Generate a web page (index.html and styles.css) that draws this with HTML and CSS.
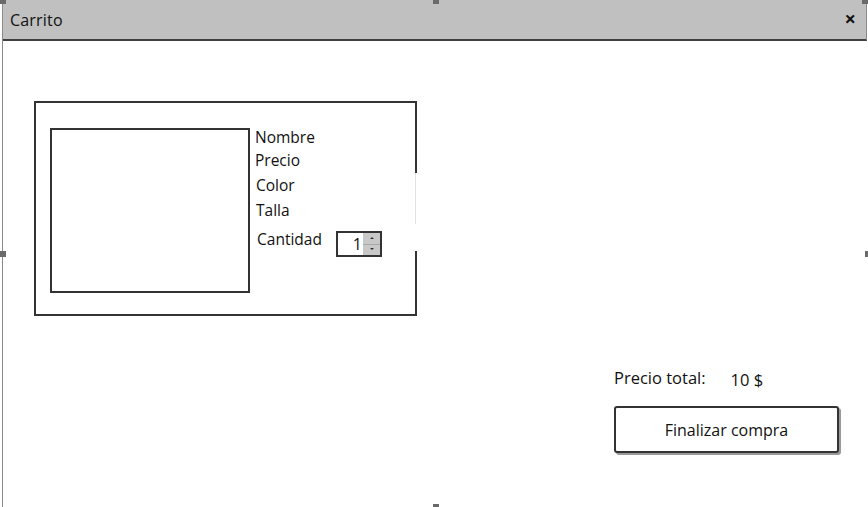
FILE: index.html
```html
<!DOCTYPE html>
<html lang="es">
<head>
<meta charset="utf-8">
<title>Carrito</title>
<link rel="stylesheet" href="styles.css">
</head>
<body>
<div class="frame">
  <header class="titlebar">
    <span class="title">Carrito</span>
    <span class="close">×</span>
  </header>
  <main class="content">
    <section class="card">
      <div class="thumb"></div>
      <div class="details">
        <div class="field f-name">Nombre</div>
        <div class="field f-price">Precio</div>
        <div class="field f-color">Color</div>
        <div class="field f-size">Talla</div>
        <div class="qty-row">
          <span class="field">Cantidad</span>
          <div class="spinner">
            <span class="spin-value">1</span>
            <span class="spin-btns">
              <span class="spin-up"></span>
              <span class="spin-down"></span>
            </span>
          </div>
        </div>
      </div>
      <span class="gap"></span>
    </section>
    <section class="checkout">
      <div class="total-row">
        <span class="total-label">Precio total:</span>
        <span class="total-value">10 $</span>
      </div>
      <button class="buy">Finalizar compra</button>
    </section>
  </main>
  <span class="handle h-tl"></span>
  <span class="handle h-tc"></span>
  <span class="handle h-tr"></span>
  <span class="handle h-ml"></span>
  <span class="handle h-mr"></span>
  <span class="handle h-bc"></span>
</div>
</body>
</html>
```
FILE: styles.css
```css
html, body {
  margin: 0;
  padding: 0;
  background: #fff;
}
body {
  width: 868px;
  height: 507px;
  overflow: hidden;
  font-family: "Open Sans", "DejaVu Sans", sans-serif;
  color: #111;
}
.frame {
  position: relative;
  height: 507px;
  margin-left: 2px;
  border-left: 1px solid #8a8a8a;
  box-sizing: border-box;
}
.titlebar {
  display: flex;
  align-items: center;
  justify-content: space-between;
  height: 39px;
  margin-right: 1px;
  background: #c0c0c0;
  border-bottom: 2px solid #3f3f3f;
  border-right: 1px solid #8a8a8a;
  padding: 0 10px 0 7px;
}
.title {
  font-size: 16px;
  letter-spacing: 0.2px;
}
.close {
  font-size: 20px;
  font-weight: bold;
  line-height: 1;
  margin-top: -2px;
}
.content {
  padding-left: 31px;
}
.card {
  position: relative;
  display: flex;
  width: 383px;
  height: 215px;
  margin-top: 60px;
  box-sizing: border-box;
  border: 2px solid #333;
  padding: 25px 0 0 14px;
}
.thumb {
  width: 200px;
  height: 165px;
  box-sizing: border-box;
  border: 2px solid #333;
  flex: none;
}
.details {
  margin-left: 5px;
  display: flex;
  flex-direction: column;
}
.field {
  font-size: 15.5px;
  line-height: 20px;
}
.f-name { margin-top: -1px; }
.f-price { margin-top: 3px; }
.f-color { margin-top: 5px; margin-left: 1px; }
.f-size { margin-top: 5px; margin-left: 1px; }
.qty-row {
  display: flex;
  align-items: flex-start;
  margin-top: 9px;
  margin-left: 2px;
}
.spinner {
  display: flex;
  margin-left: 14px;
  margin-top: 2px;
  width: 46px;
  height: 26px;
  box-sizing: border-box;
  border: 2px solid #333;
}
.spin-value {
  flex: 1;
  text-align: right;
  font-size: 16px;
  line-height: 22px;
  padding-right: 1px;
}
.spin-btns {
  width: 17px;
  display: flex;
  flex-direction: column;
  background: #c8c8c8;
}
.spin-up, .spin-down {
  flex: 1;
  position: relative;
}
.spin-up { border-bottom: 1px solid #a8a8a8; }
.spin-up::after, .spin-down::after {
  content: "";
  position: absolute;
  left: 7px;
  top: 4px;
  border-left: 2px solid transparent;
  border-right: 2px solid transparent;
}
.spin-up::after { border-bottom: 2px solid #333; }
.spin-down::after { border-top: 2px solid #333; top: 3px; }
.gap {
  position: absolute;
  right: -2px;
  top: 70px;
  width: 2px;
  height: 78px;
  background: linear-gradient(to bottom, #e2e2e2 0, #e2e2e2 51px, #fff 51px) left / 1px 100% no-repeat, #fff;
}
.checkout {
  margin-left: 580px;
  margin-top: 50px;
  width: 226px;
}
.total-row {
  display: flex;
  align-items: baseline;
  height: 40px;
}
.total-label {
  font-size: 16.5px;
}
.total-value {
  font-size: 16.5px;
  margin-left: 25px;
  position: relative;
  top: 2px;
}
.buy {
  display: block;
  width: 225px;
  height: 47px;
  background: #fff;
  border: 2px solid #333;
  border-radius: 3px;
  box-shadow: 2px 2px 0 #9a9a9a;
  font-family: inherit;
  font-size: 16px;
  color: #111;
  padding: 0;
}
.handle {
  position: absolute;
  width: 6px;
  height: 4px;
  background: #6a6a6a;
}
.h-tl { left: -3px; top: 0; }
.h-tc { left: 430px; top: 0; }
.h-tr { right: 0; top: 0; }
.h-ml { left: -3px; top: 251px; height: 6px; }
.h-mr { right: 0; top: 251px; width: 3px; height: 6px; }
.h-bc { left: 430px; bottom: 0; height: 3px; }
```
